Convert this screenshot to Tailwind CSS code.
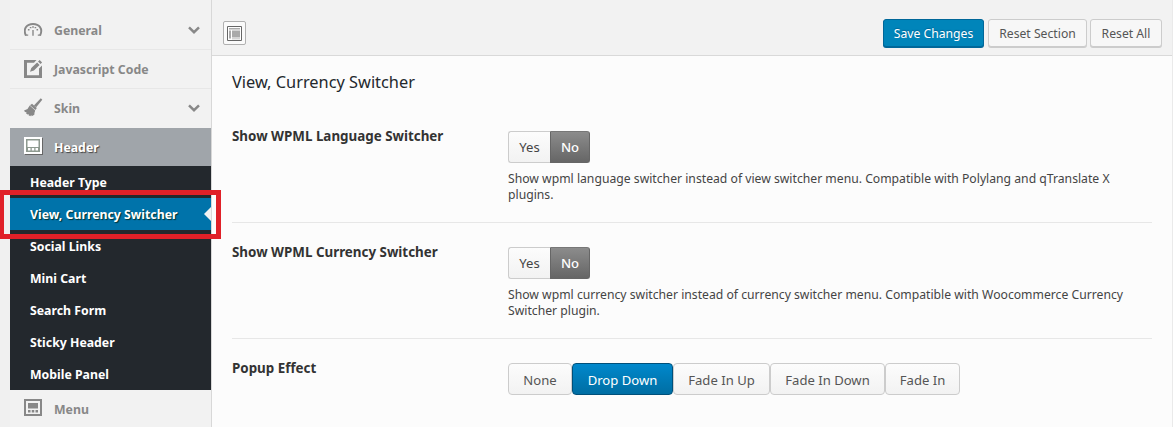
<!DOCTYPE html>
<html lang="en">
<head>
<meta charset="utf-8">
<title>Theme Options</title>
<script src="https://cdn.jsdelivr.net/npm/@tailwindcss/browser@4"></script>
</head>
<body class="relative flex h-[427px] w-[1173px] overflow-hidden bg-[#f0f0f0] pl-[10px] font-['Noto_Sans',sans-serif] text-[#333]">

<aside class="flex w-[201px] shrink-0 flex-col bg-[#f2f2f2] text-[12.3px] font-bold leading-4 text-[#888] [&>*]:shrink-0">
  <a class="flex h-[50px] items-center border-b border-[#e7e7e7] pl-[14px] pr-[11px] pt-[11px]">
    <svg class="h-5 w-5 shrink-0" viewBox="0 0 20 20" fill="none" stroke="#888"><path d="M1.900 15.500C-1.400 8.500 3 4 9 4s10.400 4.500 7.100 11.500" stroke-width="1.900"/><path d="M1.200 15.100h3M13.800 15.100h3" stroke-width="1.300"/><path d="M9 10v5.800" stroke-width="1.400"/><path d="M3.900 9.800h1.600M5.800 7.600h1.600M8.200 7h1.600M10.600 7.600h1.600M12.500 9.800h1.600" stroke-width="1.400"/></svg>
    <span class="ml-[10px] grow pt-0.5">General</span>
    <svg class="h-3 w-3" viewBox="0 0 12 12" fill="none" stroke="#888" stroke-width="2.500"><path d="M1 3.400 6 8.200l5-4.800"/></svg>
  </a>
  <a class="flex h-[39px] items-center border-b border-[#e7e7e7] pl-[14px] pr-[11px] pt-px">
    <svg class="h-5 w-5 shrink-0" viewBox="0 0 20 20" fill="#888"><path d="M0 0h12.500L10 2.800H3v12.400h12V8.500l3-3V18H0z"/><path d="m6 11.800 1.300-3.900 5.800-5.500 2.500 2.500-5.700 5.700zM14 1.600l1.700-1.500 2.400 2.400-1.600 1.600z"/></svg>
    <span class="ml-[10px] grow pt-px">Javascript Code</span>
  </a>
  <a class="flex h-[39px] items-center pb-px pl-[14px] pr-[11px]">
    <svg class="h-5 w-5 shrink-0" viewBox="0 0 20 20" fill="#888"><path d="m16.800.300 1.500 1.400-6.100 7.600-2.300-1.800z"/><path d="M8 5.800 12.800 10l-1.400 2.100L6 7.300z"/><path d="m5.700 7.500 5.500 4.900-.7 2.300-.2 2.100-2.600 1.500-.5-1.300-.9 1.200-1.700-.9.300-1-1.400.3-1.500-1.400.6-1-1.600-.1-1-1.700L3.500 11z"/></svg>
    <span class="ml-[10px] grow pt-px">Skin</span>
    <svg class="h-3 w-3" viewBox="0 0 12 12" fill="none" stroke="#888" stroke-width="2.500"><path d="M1 3.400 6 8.200l5-4.800"/></svg>
  </a>
  <a class="flex h-[38px] items-center bg-[#a0a5aa] pl-[14px] text-white [text-shadow:1px_1px_1px_#444]">
    <svg class="h-5 w-5 shrink-0" viewBox="0 0 20 20"><path fill="#666" d="M1 1h18v17H1z"/><path fill="#fff" d="M0 0h18v17H0z"/><path fill="#8e9a90" d="M2 2h14v13H2z"/><path fill="#fff" d="M3.500 3.500h11v6.500h-11zM4 11h2.500v2.500H4zM7.750 11h2.500v2.500h-2.500zM11.500 11H14v2.500h-2.500z"/></svg>
    <span class="ml-[10px] pt-0.5">Header</span>
  </a>
  <nav class="flex flex-col bg-[#23282d] text-white [&>a]:pt-px">
    <a class="flex h-8 items-center pl-5">Header Type</a>
    <a class="relative flex h-8 items-center bg-[#0073aa] pl-5 [text-shadow:1px_1px_1px_#033]">View, Currency Switcher
      <svg class="absolute right-0 top-[9px] h-[14px] w-[7px]" viewBox="0 0 7 14"><path fill="#f2f2f2" d="M7 0v14L0 7z"/></svg>
    </a>
    <a class="flex h-8 items-center pl-5">Social Links</a>
    <a class="flex h-8 items-center pl-5">Mini Cart</a>
    <a class="flex h-8 items-center pl-5">Search Form</a>
    <a class="flex h-8 items-center pl-5">Sticky Header</a>
    <a class="flex h-8 items-center pl-5">Mobile Panel</a>
  </nav>
  <a class="flex h-[37px] items-center pl-[14px] pt-px">
    <svg class="h-5 w-5 shrink-0" viewBox="0 0 20 20"><path fill="#888" d="M0 0h18v17H0z"/><path fill="#f2f2f2" d="M2 2h14v13H2z"/><path fill="#888" d="M4 4h10v5.500H4zM4 11h2.500v2.500H4zM7.750 11h2.500v2.500h-2.500zM11.500 11H14v2.500h-2.500z"/></svg>
    <span class="ml-[10px] pt-px">Menu</span>
  </a>
</aside>

<main class="flex w-[962px] shrink-0 flex-col border-x border-x-[#d8d8d8] border-r-[#eaeaea] bg-[#fcfcfc]">
  <header class="flex h-14 shrink-0 justify-between border-b border-[#d9d9d9] bg-[#f2f2f2] pl-[11px] pr-[10px]">
    <button class="mt-[21px] flex h-6 w-[23px] items-center justify-center rounded-[2px] border border-[#b0b0b0] bg-[#fafafa]">
      <svg class="h-[15px] w-[15px]" viewBox="0 0 15 15"><path fill="#fff" stroke="#666" d="M.5.500h14v14H.5z"/><path fill="#aaa" d="M2 2h11v1.500H2zM2 4.500h2v8H2zM5 4.500h8v7H5zM5 12.500h8v.8H5z"/></svg>
    </button>
    <div class="flex gap-1 pt-[19px] text-[12.2px] text-[#555]">
      <button class="h-7 w-[101px] rounded-[3px] border border-[#006799] bg-[#0085ba] pt-[3px] text-white shadow-[0_1px_0_#006799] [text-shadow:0_-1px_1px_#006799]">Save Changes</button>
      <button class="h-7 w-[99px] rounded-[3px] border border-[#ccc] bg-[#f7f7f7] pt-[3px] shadow-[0_1px_0_#ccc]">Reset Section</button>
      <button class="-ml-px h-7 w-[72px] rounded-[3px] border border-[#ccc] bg-[#f7f7f7] pt-[3px] shadow-[0_1px_0_#ccc]">Reset All</button>
    </div>
  </header>

  <div class="flex flex-col px-5">
    <h1 class="mb-px mt-[14px] h-6 text-[16.35px] leading-6 text-[#23282d]">View, Currency Switcher</h1>

    <section class="flex h-[128px] border-b border-[#e7e7e7] pt-9">
      <h2 class="-mt-[3px] w-[276px] shrink-0 text-[13.39px] font-bold leading-4 text-[#333]">Show WPML Language Switcher</h2>
      <div class="w-[644px]">
        <div class="flex h-8 w-[82px] text-[13.1px] [&>button]:leading-[30px]">
          <button class="w-[42px] rounded-l-[3px] border border-r-0 border-[#ccc] bg-linear-to-b from-[#fcfcfc] to-[#f2f2f2] text-[#444]">Yes</button>
          <button class="w-10 rounded-r-[3px] border border-[#666] border-t-[#777] bg-linear-to-b from-[#8c8c8c] to-[#666] font-medium text-white">No</button>
        </div>
        <p class="mt-2 text-[12.2px] leading-4 text-[#444]">Show wpml language switcher instead of view switcher menu. Compatible with Polylang and qTranslate X<br>plugins.</p>
      </div>
    </section>

    <section class="flex h-[116px] border-b border-[#e7e7e7] pt-6">
      <h2 class="-mt-[3px] w-[276px] shrink-0 text-[13.39px] font-bold leading-4 text-[#333]">Show WPML Currency Switcher</h2>
      <div class="w-[644px]">
        <div class="flex h-8 w-[82px] text-[13.1px] [&>button]:leading-[30px]">
          <button class="w-[42px] rounded-l-[3px] border border-r-0 border-[#ccc] bg-linear-to-b from-[#fcfcfc] to-[#f2f2f2] text-[#444]">Yes</button>
          <button class="w-10 rounded-r-[3px] border border-[#666] border-t-[#777] bg-linear-to-b from-[#8c8c8c] to-[#666] font-medium text-white">No</button>
        </div>
        <p class="mt-2 text-[12.2px] leading-4 text-[#444]">Show wpml currency switcher instead of currency switcher menu. Compatible with Woocommerce Currency<br>Switcher plugin.</p>
      </div>
    </section>

    <section class="flex pt-6">
      <h2 class="-mt-[3px] w-[276px] shrink-0 text-[13.39px] font-bold leading-4 text-[#333]">Popup Effect</h2>
      <div class="flex h-8 text-[13.1px] text-[#555] [&>button]:rounded-[4px] [&>button]:border [&>button]:pt-[3px]">
        <button class="w-16 border-[#ccc] bg-linear-to-b from-[#fcfcfc] to-[#f2f2f2]">None</button>
        <button class="w-[101px] border-[#00507a] bg-linear-to-b from-[#0088cc] to-[#006ea3] text-white">Drop Down</button>
        <button class="w-[97px] border-[#ccc] bg-linear-to-b from-[#fcfcfc] to-[#f2f2f2]">Fade In Up</button>
        <button class="w-[115px] border-[#ccc] bg-linear-to-b from-[#fcfcfc] to-[#f2f2f2]">Fade In Down</button>
        <button class="w-[75px] border-[#ccc] bg-linear-to-b from-[#fcfcfc] to-[#f2f2f2]">Fade In</button>
      </div>
    </section>
  </div>
</main>

<div class="absolute left-0 top-[190px] h-[49px] w-[221px] border-[5px] border-l-4 border-[#e02028]"></div>
</body>
</html>
